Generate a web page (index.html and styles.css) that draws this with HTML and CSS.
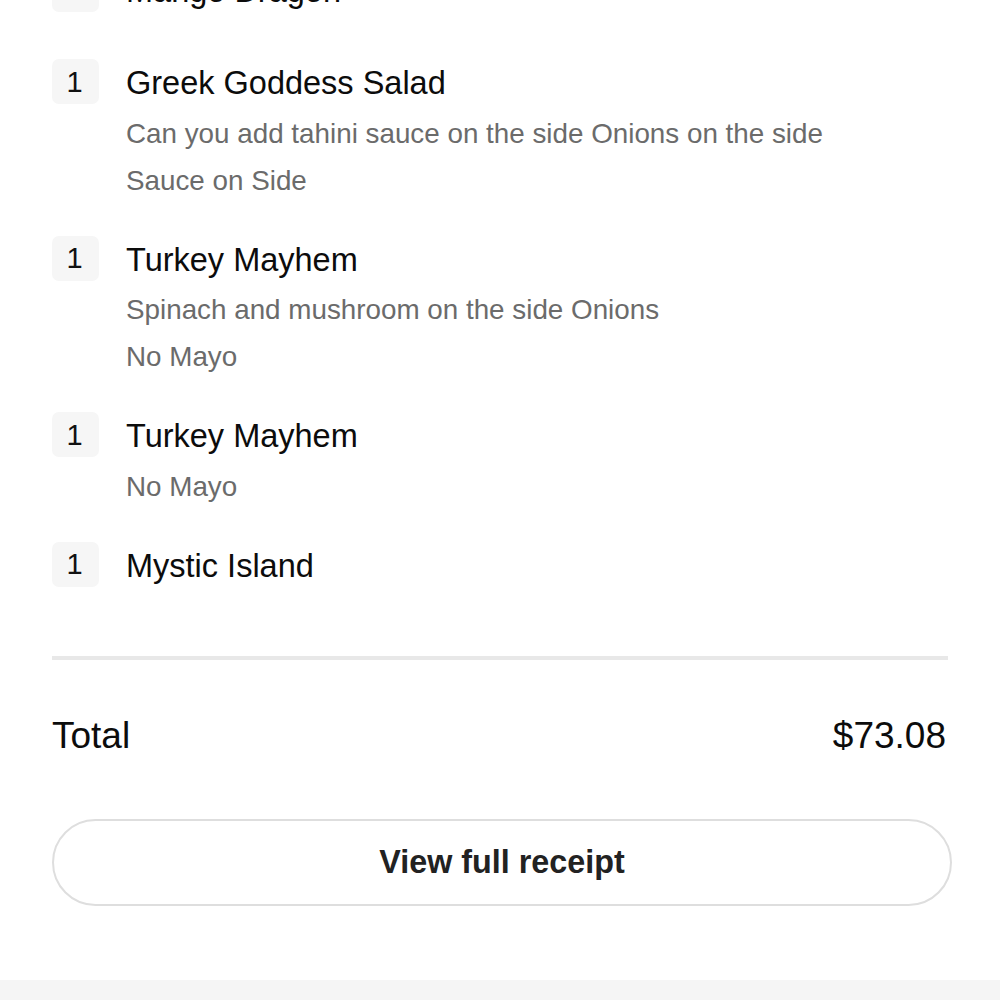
FILE: index.html
```html
<!DOCTYPE html>
<html lang="en">
<head>
<meta charset="utf-8">
<title>Order</title>
<link rel="stylesheet" href="styles.css">
</head>
<body>
<main class="page">
  <ul class="items">
    <li class="item">
      <span class="qty">1</span>
      <div class="body">
        <div class="name">Mango Dragon</div>
      </div>
    </li>
    <li class="item">
      <span class="qty">1</span>
      <div class="body">
        <div class="name">Greek Goddess Salad</div>
        <div class="mods">
          <div class="mod">Can you add tahini sauce on the side Onions on the side</div>
          <div class="mod">Sauce on Side</div>
        </div>
      </div>
    </li>
    <li class="item">
      <span class="qty">1</span>
      <div class="body">
        <div class="name">Turkey Mayhem</div>
        <div class="mods">
          <div class="mod">Spinach and mushroom on the side Onions</div>
          <div class="mod">No Mayo</div>
        </div>
      </div>
    </li>
    <li class="item">
      <span class="qty">1</span>
      <div class="body">
        <div class="name">Turkey Mayhem</div>
        <div class="mods">
          <div class="mod">No Mayo</div>
        </div>
      </div>
    </li>
    <li class="item">
      <span class="qty">1</span>
      <div class="body">
        <div class="name">Mystic Island</div>
      </div>
    </li>
  </ul>
  <hr class="divider">
  <div class="total">
    <span>Total</span>
    <span>$73.08</span>
  </div>
  <button class="receipt" type="button">View full receipt</button>
</main>
<footer class="strip"></footer>
</body>
</html>
```

FILE: styles.css
```css
* { box-sizing: border-box; }
html, body {
  margin: 0;
  padding: 0;
  background: #fff;
}
body {
  font-family: "Liberation Sans", Arial, Helvetica, sans-serif;
  color: #111;
  overflow: hidden;
  height: 1000px;
  display: flex;
  flex-direction: column;
}
.page {
  padding: 0 52px;
  flex: 1;
}
.items {
  list-style: none;
  margin: -33px 0 0;
  padding: 0;
  display: flex;
  flex-direction: column;
  gap: 32px;
}
.item {
  display: flex;
  align-items: flex-start;
  gap: 27px;
}
.qty {
  flex: none;
  width: 47px;
  height: 45px;
  border-radius: 7px;
  background: #f6f6f6;
  display: flex;
  align-items: center;
  justify-content: center;
  padding-right: 2px;
  padding-top: 1px;
  font-size: 29px;
  color: #111;
}
.body {
  min-height: 60px;
}
.name {
  font-size: 32.5px;
  line-height: 45px;
  padding-top: 2px;
  color: #0c0c0c;
}
.mods {
  margin-top: 3.5px;
}
.mod {
  font-size: 27.8px;
  line-height: 47px;
  color: #6b6b6b;
}
.divider {
  margin: 54px 0 0;
  border: 0;
  height: 4px;
  background: #e8e8e8;
}
.total {
  margin-top: 54px;
  display: flex;
  justify-content: space-between;
  align-items: center;
  font-size: 37px;
  line-height: 44px;
  color: #0c0c0c;
  padding-right: 2px;
}
.receipt {
  display: block;
  margin-top: 61px;
  width: 900px;
  height: 87px;
  border: 2px solid #dedede;
  border-radius: 44px;
  background: #fff;
  font-family: "Liberation Sans", Arial, Helvetica, sans-serif;
  font-weight: 700;
  font-size: 32.3px;
  color: #222;
  padding: 0;
}
.strip {
  flex: none;
  height: 20px;
  background: #f5f5f5;
}
```
